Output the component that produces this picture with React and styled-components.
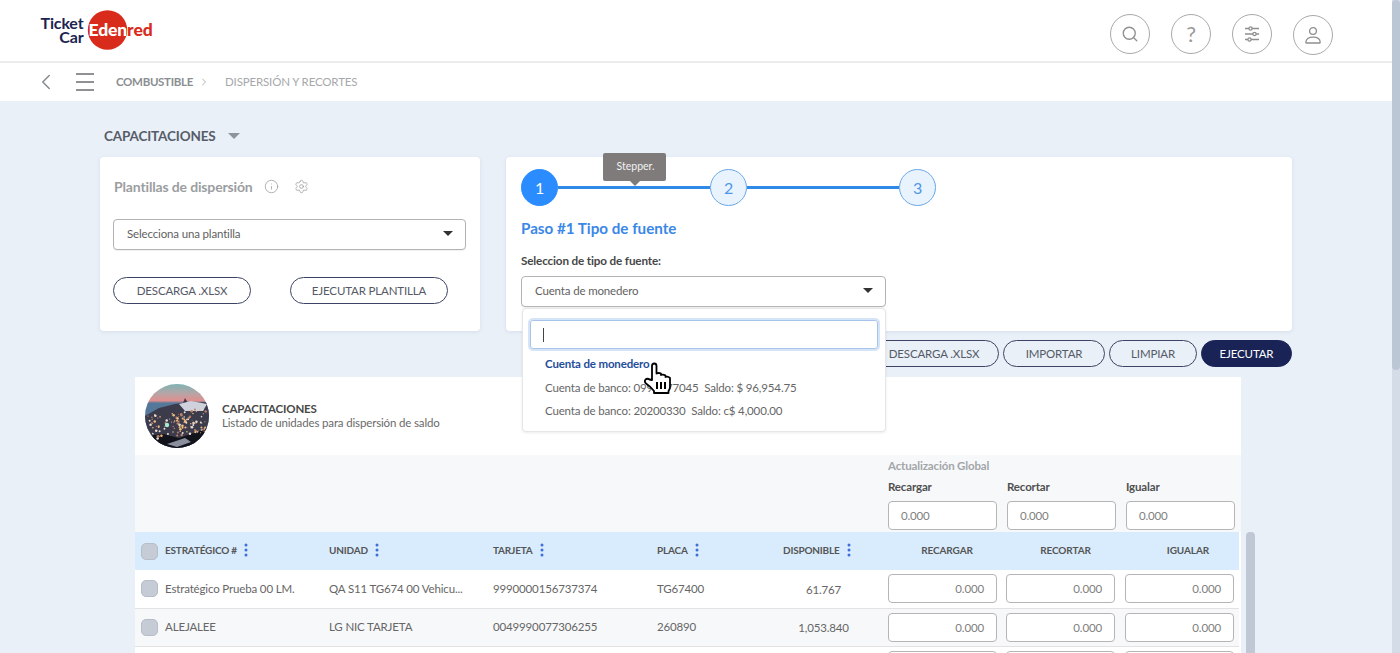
import React from 'react';
import styled, { createGlobalStyle } from 'styled-components';
import { Search, ChevronLeft, ChevronRight, Info, Settings } from 'lucide-react';

const rows = [
  { key: 'a', id: 'Estratégico Prueba 00 LM.', unit: 'QA S11 TG674 00 Vehicu...', card: '9990000156737374', plate: 'TG67400', available: '61.767', amount: '0.000' },
  { key: 'b', id: 'ALEJALEE', unit: 'LG NIC TARJETA', card: '0049990077306255', plate: '260890', available: '1,053.840', amount: '0.000', alt: true },
  // only the top edge of this row's inputs shows above the fold
  { key: 'c', id: '', unit: '', card: '', plate: '', available: '', amount: '' },
];

// scattered town lights for the avatar photo
const lights = Array.from({ length: 120 }, (_, i) => {
  const a = Math.abs(Math.sin(i * 12.9898) * 43758.5453) % 1;
  const b = Math.abs(Math.sin(i * 78.233) * 12543.1234) % 1;
  return {
    x: 3 + a * 58,
    y: 24 + b * 24 + (1 - a) * 8,
    r: 0.5 + (i % 4) * 0.25,
    c: i % 3 === 0 ? '#f3bd7c' : i % 3 === 1 ? '#eadfd4' : '#b9806a',
  };
});

const App = () => {
  return (
    <Shell>
      <GlobalStyle />
      <PageColumn>
        <TopBar>
          <Logo />
          <TopActions>
            <RoundButton><Search size={18} strokeWidth={1.8} /></RoundButton>
            <RoundButton><QuestionMark>?</QuestionMark></RoundButton>
            <RoundButton><SlidersIcon /></RoundButton>
            <RoundButton $low><UserIcon /></RoundButton>
          </TopActions>
        </TopBar>

        <Breadcrumb>
          <BackIcon><ChevronLeft size={26} strokeWidth={1.4} /></BackIcon>
          <Burger><span /><span /><span /></Burger>
          <CrumbMain>COMBUSTIBLE</CrumbMain>
          <CrumbArrow><ChevronRight size={12} strokeWidth={1.5} /></CrumbArrow>
          <CrumbCurrent>DISPERSIÓN Y RECORTES</CrumbCurrent>
        </Breadcrumb>

        <Main>
          <CompanyTitle>
            CAPACITACIONES
            <Caret $color="#8f949c" $size={6} />
          </CompanyTitle>

          <CardsRow>
            <TemplateCard>
              <CardTitle>
                Plantillas de dispersión
                <TitleIcon><Info size={15} strokeWidth={1.2} /></TitleIcon>
                <TitleIcon><Settings size={15} strokeWidth={1.2} /></TitleIcon>
              </CardTitle>
              <SelectBox>
                Selecciona una plantilla
                <Caret $color="#333" $size={5} />
              </SelectBox>
              <TemplateActions>
                <PillButton $width={138}>DESCARGA .XLSX</PillButton>
                <PillButton $width={158}>EJECUTAR PLANTILLA</PillButton>
              </TemplateActions>
            </TemplateCard>

            <StepperCard>
              <Stepper>
                <Step $active>1</Step>
                <StepLine>
                  <Tooltip>Stepper.</Tooltip>
                </StepLine>
                <Step>2</Step>
                <StepLine />
                <Step>3</Step>
              </Stepper>
              <StepTitle>Paso #1 Tipo de fuente</StepTitle>
              <FieldLabel>Seleccion de tipo de fuente:</FieldLabel>
              <SourceSelect>
                <SelectBox>
                  Cuenta de monedero
                  <Caret $color="#333" $size={5} />
                </SelectBox>
                <Dropdown>
                  <DropdownSearch><TextCaret /></DropdownSearch>
                  <Option $selected>Cuenta de monedero</Option>
                  <Option>Cuenta de banco: 0992277045&nbsp; Saldo: $ 96,954.75</Option>
                  <Option>Cuenta de banco: 20200330&nbsp; Saldo: c$ 4,000.00</Option>
                  <HandCursor />
                </Dropdown>
              </SourceSelect>
            </StepperCard>
          </CardsRow>

          <ActionsRow>
            <SmallPill $width={130}>DESCARGA .XLSX</SmallPill>
            <SmallPill $width={102}>IMPORTAR</SmallPill>
            <SmallPill $width={88}>LIMPIAR</SmallPill>
            <SmallPill $width={91} $primary>EJECUTAR</SmallPill>
          </ActionsRow>

          <TableArea>
            <TableCard>
              <TableHeading>
                <Avatar />
                <div>
                  <HeadingTitle>CAPACITACIONES</HeadingTitle>
                  <HeadingSub>Listado de unidades para dispersión de saldo</HeadingSub>
                </div>
              </TableHeading>

              <GlobalUpdate>
                <GlobalTitle>Actualización Global</GlobalTitle>
                <GlobalFields>
                  {['Recargar', 'Recortar', 'Igualar'].map(name => (
                    <GlobalField key={name}>
                      <GlobalLabel>{name}</GlobalLabel>
                      <AmountBox>0.000</AmountBox>
                    </GlobalField>
                  ))}
                </GlobalFields>
              </GlobalUpdate>

              <HeaderRow>
                <CheckBox />
                <HeadCell>ESTRATÉGICO # <Kebab /></HeadCell>
                <HeadCell>UNIDAD <Kebab /></HeadCell>
                <HeadCell>TARJETA <Kebab /></HeadCell>
                <HeadCell>PLACA <Kebab /></HeadCell>
                <HeadCell $center>DISPONIBLE <Kebab /></HeadCell>
                <AmountHead>RECARGAR</AmountHead>
                <AmountHead>RECORTAR</AmountHead>
                <AmountHead>IGUALAR</AmountHead>
              </HeaderRow>

              {rows.map(row => (
                <DataRow key={row.key} $alt={row.alt}>
                  <CheckBox />
                  <Cell>{row.id}</Cell>
                  <Cell>{row.unit}</Cell>
                  <Cell>{row.card}</Cell>
                  <Cell>{row.plate}</Cell>
                  <AvailableCell>{row.available}</AvailableCell>
                  <AmountBox $right>{row.amount}</AmountBox>
                  <AmountBox $right>{row.amount}</AmountBox>
                  <AmountBox $right>{row.amount}</AmountBox>
                </DataRow>
              ))}
            </TableCard>
            <TableScrollbar />
          </TableArea>
        </Main>
      </PageColumn>
      <PageScrollbar><PageThumb /></PageScrollbar>
    </Shell>
  );
};

const Logo = () => (
  <LogoSvg viewBox="0 0 125 44" width="125" height="44">
    <defs>
      <clipPath id="logo-circle"><circle cx="67.5" cy="20" r="19.7" /></clipPath>
    </defs>
    <text x="43.5" y="18.5" textAnchor="end" fontSize="16" fontWeight="700" fill="#1b2350" fontFamily="Lato, sans-serif">Ticket</text>
    <text x="43.5" y="33" textAnchor="end" fontSize="16" fontWeight="700" fill="#1b2350" fontFamily="Lato, sans-serif">Car</text>
    <text x="48.5" y="25.5" fontSize="17.5" fontWeight="900" fill="#d92b1c" textLength="64" fontFamily="Lato, sans-serif">Edenred</text>
    <circle cx="67.5" cy="20" r="19.7" fill="#d92b1c" />
    <text x="48.5" y="25.5" fontSize="17.5" fontWeight="900" fill="#fff" textLength="64" clipPath="url(#logo-circle)" fontFamily="Lato, sans-serif">Edenred</text>
  </LogoSvg>
);

const SlidersIcon = () => (
  <svg width="18" height="18" viewBox="0 0 18 18" fill="none" stroke="#8f8f8f" strokeWidth="1.3">
    <path d="M2 3.5h4M9 3.5h7M2 9h8M13 9h3M2 14.5h3M8 14.5h8" />
    <circle cx="7.5" cy="3.5" r="1.6" />
    <circle cx="11.5" cy="9" r="1.6" />
    <circle cx="6.5" cy="14.5" r="1.6" />
  </svg>
);

const UserIcon = () => (
  <svg width="18" height="18" viewBox="0 0 18 18" fill="none" stroke="#8f8f8f" strokeWidth="1.3">
    <circle cx="9" cy="5" r="3.4" />
    <path d="M1.8 16.5c0-3.6 3-5.3 7.2-5.3s7.2 1.7 7.2 5.3c0 .3-.2.5-.5.5H2.3c-.3 0-.5-.2-.5-.5z" />
  </svg>
);

const Kebab = () => (
  <KebabSvg width="4" height="14" viewBox="0 0 4 14" fill="#3f6fd8">
    <circle cx="2" cy="2" r="1.5" />
    <circle cx="2" cy="7" r="1.5" />
    <circle cx="2" cy="12" r="1.5" />
  </KebabSvg>
);

const Avatar = () => (
  <AvatarSvg viewBox="0 0 64 64" width="64" height="64">
    <defs>
      <linearGradient id="avatar-sky" x1="0" y1="0" x2="0" y2="1">
        <stop offset="0" stopColor="#7fb3b2" />
        <stop offset="0.14" stopColor="#b3a6a8" />
        <stop offset="0.26" stopColor="#e08f8e" />
        <stop offset="0.3" stopColor="#55779a" />
        <stop offset="0.42" stopColor="#55779a" />
      </linearGradient>
    </defs>
    <rect width="64" height="64" fill="url(#avatar-sky)" />
    <path d="M0 32 L14 24 L30 20 L38 19 L40 14 L43 19 L64 18 V64 H0 Z" fill="#3b3b4c" />
    <path d="M0 52 L18 50 L34 54 L64 44 V64 H0 Z" fill="#12131b" />
    <path d="M34 20 L46 17 L62 20 L58 27 L40 27 Z" fill="#cfd2dc" />
    {lights.map((l, i) => (
      <circle key={i} cx={l.x} cy={l.y} r={l.r} fill={l.c} />
    ))}
    <circle cx="22" cy="41" r="2.2" fill="#a6ecd0" />
    <path d="M22 60 L40 54 L46 58 L32 63 Z" fill="#8a8f9e" />
  </AvatarSvg>
);

const HandCursor = () => (
  <HandSvg width="30" height="33" viewBox="0 0 30 33">
    <path
      d="M9 18V4Q9 1.5 11.2 1.5 13.5 1.5 13.5 4V11.5Q15.5 10.5 18 11.5V13Q20 12 22.5 13.5V15Q25 14 27 16V25Q27 27 25.5 29V31H11V29Q8 25 3 21.5 1 19.5 2.5 17.5 4.5 16 6.5 17.5Z"
      fill="#fff"
      stroke="#000"
      strokeWidth="1.8"
      strokeLinejoin="round"
    />
    <path d="M14 20v7M18 20v7M22 20v7" stroke="#000" strokeWidth="2" fill="none" />
  </HandSvg>
);

const GlobalStyle = createGlobalStyle`
  html, body {
    margin: 0;
    height: 100%;
    overflow: hidden;
    background: #e9f0f8;
  }

  body {
    font-family: 'Lato', 'Liberation Sans', sans-serif;
    font-size: 11.5px;
    letter-spacing: -0.15px;
    color: #555;
  }

  * {
    box-sizing: border-box;
  }
`;

const Shell = styled.div`
  display: flex;
  height: 100vh;
  overflow: hidden;
`;

const PageColumn = styled.div`
  flex: 1;
  min-width: 0;
  overflow: hidden;
`;

const PageScrollbar = styled.div`
  width: 8px;
  background: #d3dce7;
`;

const PageThumb = styled.div`
  height: 370px;
  background: #bcc7d5;
  border-radius: 4px;
`;

const TopBar = styled.header`
  height: 63px;
  background: #fff;
  border-bottom: 2px solid #ececec;
  display: flex;
  align-items: flex-start;
  justify-content: space-between;
  padding: 8px 59px 0 40px;
`;

const LogoSvg = styled.svg`
  display: block;
  margin-top: 2px;
`;

const TopActions = styled.div`
  display: flex;
  gap: 21px;
  padding-top: 6px;
`;

const RoundButton = styled.div`
  width: 40px;
  height: 40px;
  border-radius: 50%;
  border: 1px solid #a9a9a9;
  color: #8f8f8f;
  display: flex;
  align-items: center;
  justify-content: center;
  margin-top: ${props => (props.$low ? '1px' : '0')};
`;

const QuestionMark = styled.span`
  font-size: 22px;
  color: #9a9a9a;
  line-height: 1;
`;

const Breadcrumb = styled.nav`
  height: 38px;
  background: #fff;
  display: flex;
  align-items: center;
  padding-left: 33px;
`;

const BackIcon = styled.span`
  display: flex;
  color: #8a8d90;
  margin-right: 17px;
`;

const Burger = styled.div`
  width: 18px;
  display: flex;
  flex-direction: column;
  gap: 6px;
  margin-right: 22px;

  span {
    height: 2px;
    background: #8f9194;
  }
`;

const CrumbMain = styled.span`
  margin-top: -2px;
  font-weight: 700;
  letter-spacing: -0.32px;
  color: #8b8e91;
`;

const CrumbArrow = styled.span`
  display: flex;
  color: #9a9a9a;
  margin: 0 15px 0 5px;
`;

const CrumbCurrent = styled.span`
  margin-top: -2px;
  color: #a6a9ac;
`;

const Main = styled.main`
  padding: 25px 100px 0;
`;

const CompanyTitle = styled.div`
  display: flex;
  align-items: center;
  gap: 12px;
  height: 20px;
  padding-left: 4px;
  font-size: 13.5px;
  font-weight: 700;
  color: #565c68;
`;

const Caret = styled.span`
  width: 0;
  height: 0;
  border-left: ${props => props.$size}px solid transparent;
  border-right: ${props => props.$size}px solid transparent;
  border-top: ${props => props.$size}px solid ${props => props.$color};
`;

const CardsRow = styled.div`
  display: flex;
  gap: 26px;
  margin-top: 11px;
`;

const Card = styled.section`
  height: 174px;
  background: #fff;
  border-radius: 4px;
  box-shadow: 0 1px 4px rgba(80, 100, 130, 0.12);
`;

const TemplateCard = styled(Card)`
  width: 380px;
  padding: 20px 14px 0 13px;
`;

const CardTitle = styled.h2`
  margin: 0;
  height: 18px;
  padding-left: 1px;
  display: flex;
  align-items: center;
  font-size: 14px;
  font-weight: 700;
  color: #9b9ea1;
`;

const TitleIcon = styled.span`
  display: flex;
  color: #999;
  margin-left: 11px;

  & + & {
    margin-left: 15px;
  }
`;

const SelectBox = styled.div`
  height: 31px;
  border: 1px solid #b3b3b3;
  border-radius: 4px;
  background: #fff;
  display: flex;
  align-items: center;
  justify-content: space-between;
  padding: 0 12px 2px 13px;
  color: #5f5f5f;
  box-shadow: 0 1px 1px rgba(0, 0, 0, 0.06);

  ${CardTitle} + & {
    margin-top: 24px;
  }
`;

const TemplateActions = styled.div`
  display: flex;
  gap: 39px;
  margin-top: 27px;
`;

const PillButton = styled.button`
  width: ${props => props.$width}px;
  height: 27px;
  padding: 0 0 1px;
  border: 1px solid #3d4463;
  border-radius: 14px;
  background: #fff;
  font-family: inherit;
  font-size: 11.5px;
  letter-spacing: inherit;
  color: #555a66;
`;

const StepperCard = styled(Card)`
  width: 786px;
  padding: 12px 15px 0;
`;

const Stepper = styled.div`
  width: 415px;
  display: flex;
  align-items: center;
`;

const Step = styled.div`
  width: 37px;
  height: 37px;
  flex: none;
  border-radius: 50%;
  display: flex;
  align-items: center;
  justify-content: center;
  font-size: 16px;
  color: ${props => (props.$active ? '#fff' : '#4f97e8')};
  background: ${props => (props.$active ? '#2b8cff' : '#e9f3fd')};
  border: 1px solid ${props => (props.$active ? '#2b8cff' : '#6aa8e6')};
`;

const StepLine = styled.div`
  position: relative;
  flex: 1;
  height: 3px;
  background: #2e8ae6;
`;

const Tooltip = styled.div`
  position: absolute;
  left: 45px;
  top: -33px;
  width: 63px;
  height: 28px;
  border-radius: 2px;
  background: #7f7b7b;
  color: #f2f2f2;
  font-size: 10.5px;
  letter-spacing: 0;
  display: flex;
  align-items: center;
  justify-content: center;
  padding: 0 0 3px 2px;

  &::after {
    content: '';
    position: absolute;
    left: 27px;
    bottom: -5px;
    border-left: 5px solid transparent;
    border-right: 5px solid transparent;
    border-top: 5px solid #7f7b7b;
  }
`;

const StepTitle = styled.h3`
  margin: 12px 0 0;
  font-size: 15.2px;
  line-height: 20px;
  letter-spacing: 0;
  font-weight: 700;
  color: #3a87e8;
`;

const FieldLabel = styled.div`
  margin-top: 14px;
  font-size: 11.7px;
  line-height: 16px;
  font-weight: 700;
  color: #474747;
`;

const SourceSelect = styled.div`
  position: relative;
  width: 365px;
  margin-top: 8px;
`;

const Dropdown = styled.div`
  position: absolute;
  z-index: 5;
  left: 1px;
  top: 32px;
  width: 364px;
  height: 124px;
  padding: 11px 7px 0;
  background: #fff;
  border-radius: 4px;
  border: 1px solid #e6e6e6;
  box-shadow: 0 1px 3px rgba(0, 0, 0, 0.08);
`;

const DropdownSearch = styled.div`
  height: 29px;
  margin-bottom: 3px;
  border: 1px solid #a9c4ea;
  border-radius: 3px;
  box-shadow: 0 0 0 2px #d5e4f7;
  display: flex;
  align-items: center;
  padding-left: 12px;
`;

const TextCaret = styled.span`
  width: 1px;
  height: 14px;
  background: #444;
`;

const Option = styled.div`
  height: 23.5px;
  display: flex;
  align-items: center;
  padding-left: 15px;
  white-space: pre;
  font-weight: ${props => (props.$selected ? 700 : 400)};
  color: ${props => (props.$selected ? '#1f4e9a' : '#666')};
`;

const HandSvg = styled.svg`
  position: absolute;
  left: 120px;
  top: 53px;
`;

const ActionsRow = styled.div`
  display: flex;
  justify-content: flex-end;
  gap: 4px;
  margin-top: 9px;
`;

const SmallPill = styled.button`
  width: ${props => props.$width}px;
  height: 27px;
  padding: 0 0 1px;
  border: 1px solid ${props => (props.$primary ? '#1a2356' : '#3d4463')};
  border-radius: 14px;
  background: ${props => (props.$primary ? '#1a2356' : 'transparent')};
  font-family: inherit;
  font-size: 11.5px;
  letter-spacing: inherit;
  color: ${props => (props.$primary ? '#fff' : '#555a66')};
`;

const TableArea = styled.div`
  display: flex;
  gap: 5px;
  margin: 10px 0 0 35px;
`;

const TableCard = styled.section`
  width: 1106px;
  flex: none;
  background: #fff;
`;

const TableScrollbar = styled.div`
  width: 9px;
  height: 300px;
  margin-top: 155px;
  background: #bfc8d4;
  border-radius: 4px;
`;

const TableHeading = styled.div`
  height: 78px;
  display: flex;
  align-items: center;
  gap: 13px;
  padding: 0 10px;
`;

const AvatarSvg = styled.svg`
  display: block;
  border-radius: 50%;
  filter: blur(0.7px);
`;

const HeadingTitle = styled.div`
  line-height: 14px;
  font-weight: 700;
  color: #484848;
`;

const HeadingSub = styled.div`
  line-height: 14px;
  color: #6a6a6a;
`;

const GlobalUpdate = styled.div`
  height: 77px;
  background: #f7f8fa;
  padding: 4px 6px 0 753px;
`;

const GlobalTitle = styled.div`
  font-size: 11.5px;
  line-height: 14px;
  font-weight: 700;
  color: #a3a6a9;
`;

const GlobalFields = styled.div`
  display: grid;
  grid-template-columns: 109px 109px 109px;
  column-gap: 10px;
  margin-top: 6px;
`;

const GlobalField = styled.div`
  display: flex;
  flex-direction: column;
  gap: 6px;
`;

const GlobalLabel = styled.div`
  line-height: 16px;
  font-weight: 700;
  color: #505050;
`;

const AmountBox = styled.div`
  width: 109px;
  height: 29px;
  border: 1px solid #b5b5b5;
  border-radius: 4px;
  background: #fff;
  display: flex;
  align-items: center;
  justify-content: ${props => (props.$right ? 'flex-end' : 'flex-start')};
  padding: 0 12px;
  color: #808080;
`;

const tableColumns = `
  display: grid;
  grid-template-columns: 30px 164px 164px 164px 110px 121px 118px 119px 109px;
  align-items: center;
  width: 1104px;
`;

const HeaderRow = styled.div`
  ${tableColumns}
  height: 38px;
  background: #d9ecfd;
`;

const DataRow = styled.div`
  ${tableColumns}
  height: 38.5px;
  background: ${props => (props.$alt ? '#f7f8fa' : '#fff')};
  border-bottom: 1px solid #e2e2e2;
`;

const CheckBox = styled.span`
  width: 17px;
  height: 17px;
  margin-left: 6px;
  border-radius: 5px;
  background: #c6ccd6;
  border: 1px solid #b7bdc8;
`;

const HeadCell = styled.div`
  display: flex;
  align-items: center;
  gap: 6px;
  padding-bottom: 2px;
  font-size: 10px;
  font-weight: 700;
  color: #555;
  letter-spacing: -0.2px;
  padding-left: ${props => (props.$center ? '16px' : '0')};
`;

const KebabSvg = styled.svg`
  display: block;
  margin-left: 1px;
`;

const AmountHead = styled.div`
  text-align: center;
  padding-bottom: 2px;
  font-size: 10px;
  font-weight: 700;
  color: #555;
  letter-spacing: -0.1px;

  &:last-child {
    padding-left: 17px;
  }
`;

const Cell = styled.div`
  color: #666;
  white-space: nowrap;
  padding-bottom: 1px;
`;

const AvailableCell = styled(Cell)`
  text-align: center;
  padding: 1px 8px 0 0;
`;

export default App;
